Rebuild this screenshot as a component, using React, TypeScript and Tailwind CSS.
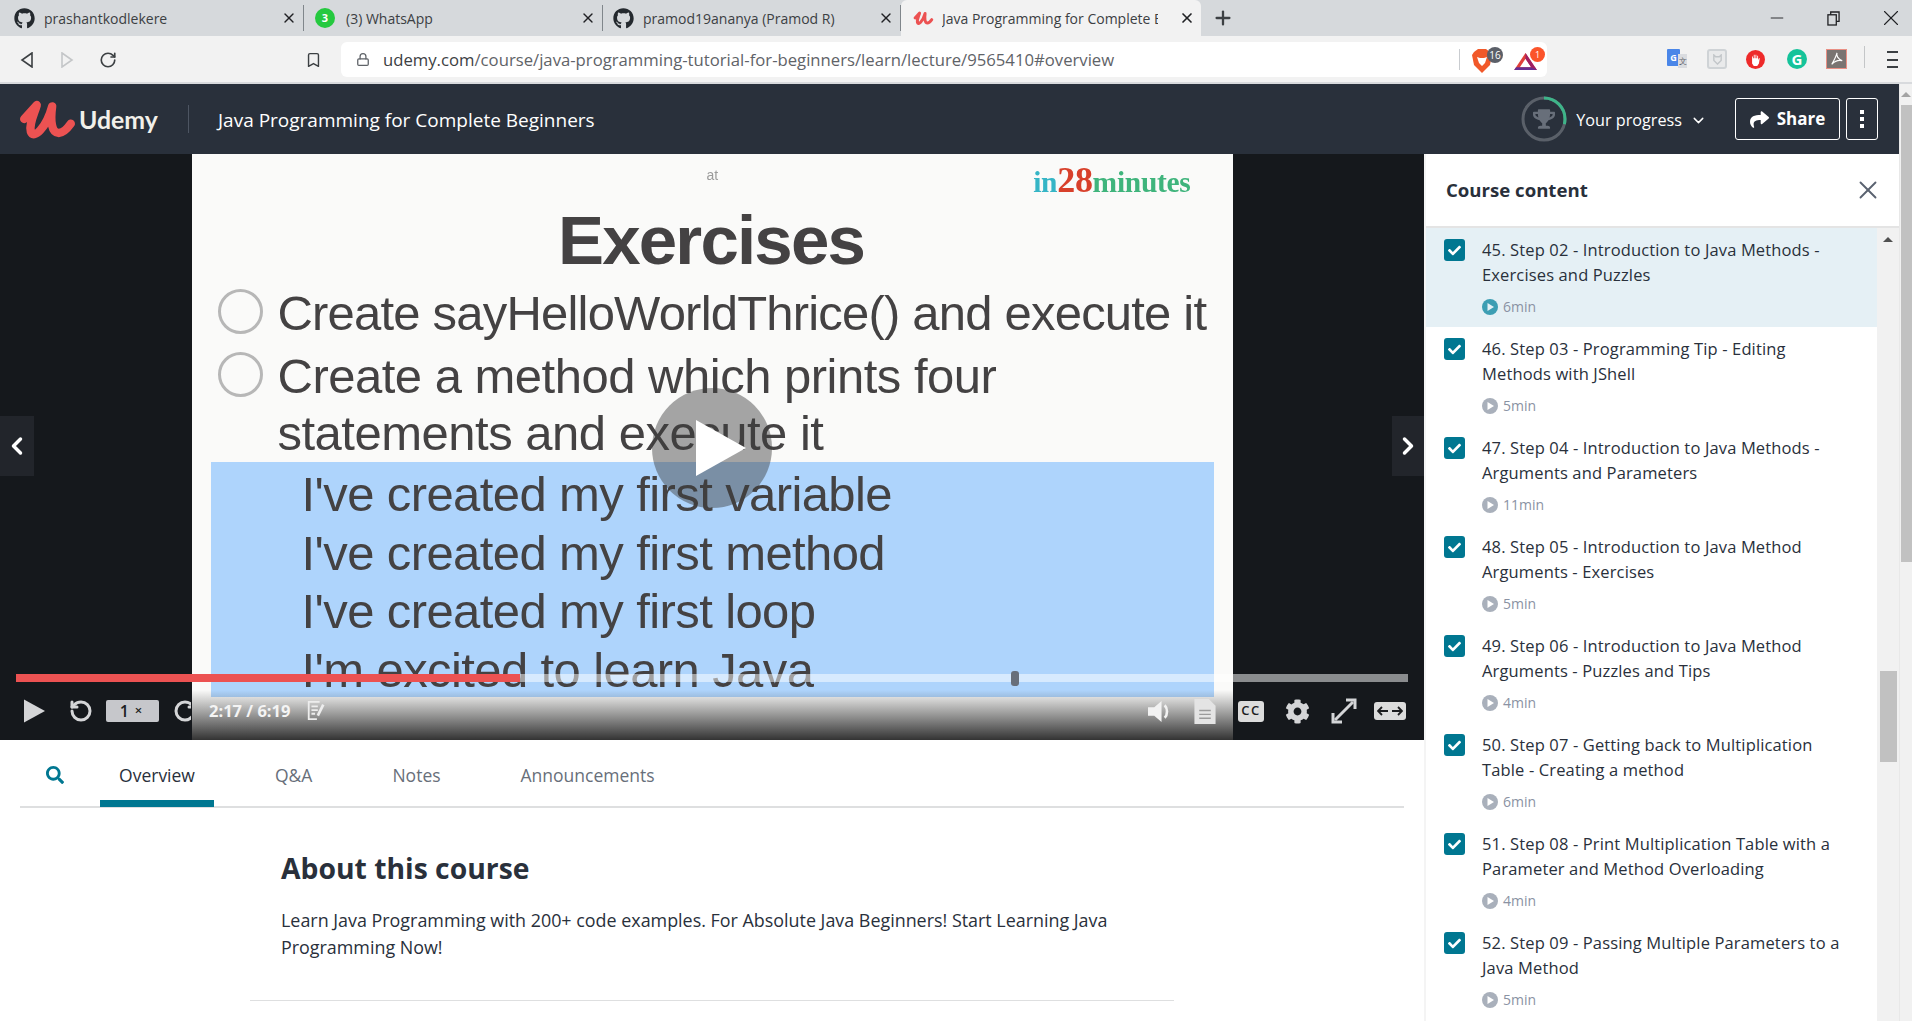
import React from 'react';
import { FaGithub, FaTrophy, FaShare, FaCog, FaCheck, FaSearch } from 'react-icons/fa';
import { ChevronDown, ChevronLeft, ChevronRight, X, Plus, RotateCcw, RotateCw, Minus, Lock, Bookmark } from 'lucide-react';

const UdemyMark: React.FC<{ className?: string }> = ({ className }) => (
  <svg viewBox="0 0 200 168" className={className} fill="none">
    <path
      d="M42 84 L80 42 C72 70 56 98 62 122 C70 146 108 112 126 46 C120 90 124 126 146 126 C160 126 172 112 182 98"
      stroke="#ec5252"
      strokeWidth="25"
      strokeLinecap="round"
      strokeLinejoin="round"
    />
  </svg>
);

const tabs = [
  { title: 'prashantkodlekere', w: 'w-[304px]', pad: 'pl-[14px]', gap: 'gap-[9px]' },
  { title: '(3) WhatsApp', w: 'w-[299px]', pad: 'pl-[11px]', gap: 'gap-[11px]' },
  { title: 'pramod19ananya (Pramod R)', w: 'w-[298px]', pad: 'pl-[10px]', gap: 'gap-[9px]' },
];

const lessons = [
  { title: '45. Step 02 - Introduction to Java Methods - Exercises and Puzzles', time: '6min', active: true },
  { title: '46. Step 03 - Programming Tip - Editing Methods with JShell', time: '5min' },
  { title: '47. Step 04 - Introduction to Java Methods - Arguments and Parameters', time: '11min' },
  { title: '48. Step 05 - Introduction to Java Method Arguments - Exercises', time: '5min' },
  { title: '49. Step 06 - Introduction to Java Method Arguments - Puzzles and Tips', time: '4min' },
  { title: '50. Step 07 - Getting back to Multiplication Table - Creating a method', time: '6min' },
  { title: '51. Step 08 - Print Multiplication Table with a Parameter and Method Overloading', time: '4min' },
  { title: '52. Step 09 - Passing Multiple Parameters to a Java Method', time: '5min' },
];

const TabStrip: React.FC = () => (
  <div className="flex h-[36px] bg-[#d6d9dc] text-[14px] text-[#3c4043]">
    {tabs.map((t, i) => (
      <div key={t.title} className={`flex items-center ${t.w} ${t.pad} ${t.gap} relative`}>
        {i === 1 ? (
          <div className="w-[20px] h-[20px] rounded-full bg-[#25c93f] text-white text-[11px] font-bold flex items-center justify-center">3</div>
        ) : (
          <FaGithub className="w-[21px] h-[21px] text-[#24292e]" />
        )}
        <span>{t.title}</span>
        <X className="absolute right-[7px] w-[16px] h-[16px] text-[#202124]" strokeWidth={2} />
        <div className="absolute right-0 top-[5px] h-[26px] w-px bg-[#80868b]" />
      </div>
    ))}
    <div className="w-[300px] bg-[#f2f2f2] flex items-center pl-[9px] gap-[8px] relative rounded-t-[6px]">
      <UdemyMark className="w-[24px] h-[20px] shrink-0" />
      <span className="whitespace-nowrap overflow-hidden w-[216px]">Java Programming for Complete B</span>
      <X className="absolute right-[6px] w-[16px] h-[16px] text-[#202124]" strokeWidth={2.5} />
    </div>
    <Plus className="w-[22px] h-[22px] ml-[11px] mt-[7px] text-[#3c4043]" strokeWidth={2.5} />
    <div className="flex-1 flex items-center justify-end text-[#202124]">
      <Minus className="w-[20px] h-[20px] mr-[40px]" strokeWidth={1.1} />
      <svg viewBox="0 0 14 16" className="w-[13px] h-[15px] mr-[38px]" fill="none" stroke="currentColor" strokeWidth="1.4">
        <rect x="1" y="4" width="9" height="11" />
        <path d="M4 4V1h9v10h-3" />
      </svg>
      <X className="w-[26px] h-[26px] mr-[8px]" strokeWidth={1} />
    </div>
  </div>
);

const Toolbar: React.FC = () => (
  <div className="h-[48px] bg-[#f2f2f2] border-b-2 border-[#d8dadd] flex items-center relative">
    <svg viewBox="0 0 14 16" className="w-[14px] h-[16px] ml-[20px] mt-[2px]" fill="none" stroke="#3c4043" strokeWidth="1.6">
      <path d="M12 1 L2 8 L12 15 Z" />
    </svg>
    <svg viewBox="0 0 14 16" className="w-[14px] h-[16px] ml-[26px] mt-[2px]" fill="none" stroke="#c4c6c8" strokeWidth="1.6">
      <path d="M2 1 L12 8 L2 15 Z" />
    </svg>
    <RotateCw className="w-[18px] h-[18px] ml-[25px] mt-[2px] text-[#3c4043]" strokeWidth={2.2} />
    <Bookmark className="w-[17px] h-[18px] ml-[188px] mt-[2px] text-[#3c4043]" strokeWidth={2} />
    <div className="ml-[19px] w-[1206px] h-[35px] mt-[1px] bg-white rounded-[6px] flex items-center pl-[15px] relative">
      <Lock className="w-[14px] h-[15px] text-[#5f6368]" strokeWidth={2.2} />
      <span className="ml-[13px] text-[16.7px] text-[#5f6368] whitespace-nowrap">
        <span className="text-[#3c4043]">udemy.com</span>/course/java-programming-tutorial-for-beginners/learn/lecture/9565410#overview
      </span>
      <div className="absolute left-[1118px] top-[7px] h-[21px] w-px bg-[#c9ccd0]" />
      <svg viewBox="0 0 20 24" className="absolute left-[1131px] top-[7px] w-[20px] h-[24px]">
        <path d="M2 3l4-3h8l4 3 2 3-2 10-8 8-8-8L0 6z" fill="#f1592a" />
        <path d="M5 8l3 1h4l3-1-2 6-3 3-3-3z" fill="#fff" />
      </svg>
      <div className="absolute left-[1146px] top-[5px] w-[16px] h-[16px] rounded-full bg-[#5b5f68] text-white text-[10px] flex items-center justify-center">16</div>
      <svg viewBox="0 0 24 18" className="absolute left-[1173px] top-[11px] w-[23px] h-[17px]">
        <path d="M12 0 L24 18 H0 Z" fill="#e0403a" />
        <path d="M12 6 L18 15 H6 Z" fill="#fff" />
        <path d="M0 18 H24 L22 15 H2 Z" fill="#662d91" />
        <path d="M12 0 L24 18 L18 15 L12 6 Z" fill="#9e1f63" />
      </svg>
      <div className="absolute left-[1189px] top-[5px] w-[15px] h-[15px] rounded-full bg-[#fb542b] text-white text-[9px] flex items-center justify-center">1</div>
    </div>
    <div className="absolute left-[1667px] top-[13px] w-[13px] h-[17px] bg-[#4a86e8] rounded-[1px] text-white text-[9px] font-bold flex items-center justify-center">G</div>
    <div className="absolute left-[1678px] top-[18px] w-[9px] h-[14px] bg-[#dadce0] text-[#5f6368] text-[8px] flex items-center justify-center">文</div>
    <div className="absolute left-[1707px] top-[13px] w-[20px] h-[20px] border-2 border-[#cfd3d6] rounded-[3px] bg-[#e9eaeb] flex items-center justify-center">
      <svg viewBox="0 0 12 12" className="w-[11px] h-[11px]" fill="none" stroke="#c2c6c9" strokeWidth="1.5">
        <path d="M2 1v6l4 4 4-4V1L8 3H4z" />
      </svg>
    </div>
    <div className="absolute left-[1746px] top-[14px] w-[19px] h-[19px] rounded-full bg-[#ee2a2a] flex items-center justify-center">
      <svg viewBox="0 0 12 14" className="w-[11px] h-[12px]" fill="#fff">
        <path d="M2 5V3h1v2h1V1h1v4h1V1h1v4h1V2h1v5l1-2h1l-1 6-2 3H4L2 11z" />
      </svg>
    </div>
    <div className="absolute left-[1787px] top-[13px] w-[20px] h-[20px] rounded-full bg-[#15c39a] text-white text-[15px] font-bold flex items-center justify-center">G</div>
    <div className="absolute left-[1826px] top-[13px] w-[21px] h-[20px] bg-[#7a7472] border border-[#e98f84] flex items-center justify-center">
      <svg viewBox="0 0 16 16" className="w-[14px] h-[14px]" fill="none" stroke="#fff" strokeWidth="1.3">
        <path d="M8 1c-1 3 1 7 6 9-4-1-8 0-12 4 3-5 5-9 6-13z" />
      </svg>
    </div>
    <div className="absolute left-[1864px] top-[10px] h-[22px] w-px bg-[#c4c6c8]" />
    <div className="absolute left-[1887px] top-[15px] w-[11px] h-[17px] flex flex-col justify-between">
      <div className="h-[2px] bg-[#3c4043]" />
      <div className="h-[2px] bg-[#3c4043]" />
      <div className="h-[2px] bg-[#3c4043]" />
    </div>
  </div>
);

const Header: React.FC = () => (
  <div className="h-[70px] bg-[#29303b] flex items-center text-white shrink-0">
    <UdemyMark className="ml-[10px] w-[67px] h-[56px]" />
    <span className="ml-[2px] text-[24.8px] font-bold text-[#f2f0ea] font-['Lato'] w-[77px] mt-px">Udemy</span>
    <div className="ml-[32px] h-[28px] w-px bg-[#4d5562]" />
    <span className="ml-[29px] text-[19px] mt-[3px]">Java Programming for Complete Beginners</span>
    <div className="ml-auto flex items-center">
      <div className="relative w-[46px] h-[46px] flex items-center justify-center">
        <svg viewBox="0 0 46 46" className="absolute inset-0 -rotate-90">
          <circle cx="23" cy="23" r="21" fill="none" stroke="#5a6069" strokeWidth="3" />
          <circle cx="23" cy="23" r="21" fill="none" stroke="#3eb489" strokeWidth="3" strokeDasharray="38 132" />
        </svg>
        <FaTrophy className="w-[22px] h-[22px] text-[#686f7a]" />
      </div>
      <span className="ml-[9px] text-[16.2px] mt-[3px]">Your progress</span>
      <ChevronDown className="ml-[8px] w-[17px] h-[17px] mt-[2px]" />
      <button className="ml-[28px] w-[105px] h-[42px] border border-white rounded-[3px] flex items-center justify-center gap-[8px] font-bold text-[17px]">
        <FaShare className="w-[19px] h-[19px]" />
        Share
      </button>
      <button className="ml-[6px] mr-[21px] w-[32px] h-[42px] border border-white rounded-[3px] flex flex-col items-center justify-center gap-[3px]">
        <div className="w-[4px] h-[4px] bg-white" />
        <div className="w-[4px] h-[4px] bg-white" />
        <div className="w-[4px] h-[4px] bg-white" />
      </button>
    </div>
  </div>
);

const Slide: React.FC = () => (
  <div className="w-[1041px] h-[586px] bg-[#fafaf9] mx-auto relative overflow-hidden font-['Liberation_Sans'] text-[#444243] flex flex-col">
    <div className="h-[50px] shrink-0 flex items-center relative">
      <span className="ml-[515px] text-[14px] text-[#9b9b9b] mt-[-7px]">at</span>
      <span className="ml-[315px] font-['Liberation_Serif'] font-bold text-[29.5px] text-[#3fb47c] mt-[1px] whitespace-nowrap tracking-[-0.3px]">
        <span className="text-[#35b5c6]">in</span>
        <span className="text-[#d8402b] text-[36px]">28</span>minutes
      </span>
    </div>
    <div className="h-[70px] mt-[2px] shrink-0 text-center font-bold text-[69px] leading-[70px] tracking-[-1.8px] pr-[2px]">Exercises</div>
    <div className="mt-[8px] flex items-center gap-[15px] pl-[26px] h-[58px] text-[49px] leading-[58px] tracking-[-0.8px] whitespace-nowrap">
      <div className="w-[45px] h-[45px] rounded-full border-[3px] border-[#b7b7b7] shrink-0 -mt-[3px]" />
      Create sayHelloWorldThrice() and execute it
    </div>
    <div className="mt-[5px] flex items-center gap-[15px] pl-[26px] h-[58px] text-[49px] leading-[58px] tracking-[-0.5px] whitespace-nowrap">
      <div className="w-[45px] h-[45px] rounded-full border-[3px] border-[#b7b7b7] shrink-0 -mt-[3px]" />
      Create a method which prints four
    </div>
    <div className="pl-[86px] h-[58px] -mt-px text-[49px] leading-[58px] tracking-[-0.5px] whitespace-nowrap">statements and execute it</div>
    <div className="ml-[19px] w-[1003px] h-[235px] bg-[#aed4fc] pl-[91px] pt-[3px] text-[49px] leading-[58.5px] tracking-[-0.6px] whitespace-nowrap shrink-0">
      <div>I've created my first variable</div>
      <div>I've created my first method</div>
      <div>I've created my first loop</div>
      <div>I'm excited to learn Java</div>
    </div>
    <div className="absolute left-0 right-0 bottom-0 h-[50px] bg-linear-to-b from-transparent to-[#333333]" />
  </div>
);

const VideoControls: React.FC = () => (
  <>
    <div className="absolute left-[16px] right-[16px] top-[520px] h-[8px] bg-[rgba(255,255,255,0.5)]">
      <div className="h-full w-[504px] bg-[#ec5252]" />
      <div className="absolute left-[995px] top-[-3px] w-[8px] h-[15px] rounded-[3px] bg-[#686f7a]" />
    </div>
    <div className="absolute left-0 right-0 top-[546px] h-[22px] flex items-center text-[#d4d5d7]">
      <svg viewBox="0 0 22 24" className="ml-[24px] w-[21px] h-[24px] shrink-0" fill="currentColor">
        <path d="M0 0 L22 12 L0 24 Z" />
      </svg>
      <RotateCcw className="ml-[24px] w-[24px] h-[24px] shrink-0" strokeWidth={3} />
      <div className="ml-[13px] w-[53px] h-[22px] bg-[#c6c7cb] rounded-[2px] text-[#1c1d1f] text-[16px] flex items-center justify-center gap-[6px] font-semibold shrink-0 pr-[3px]">
        1<span className="text-[13px]">×</span>
      </div>
      <div className="ml-[14px] w-[18px] h-[24px] overflow-hidden shrink-0">
        <RotateCw className="w-[24px] h-[24px]" strokeWidth={3} />
      </div>
      <span className="ml-[18px] w-[81px] text-[16.5px] font-bold text-[#f4f4f4] whitespace-nowrap shrink-0">2:17 / 6:19</span>
      <svg viewBox="0 0 20 22" className="ml-[16px] w-[20px] h-[20px] shrink-0" fill="none" stroke="#ededed" strokeWidth="2">
        <path d="M14 1H2v19h9M5 6h7M5 10h7M5 14h4" />
        <path d="M18 4l-6 12" strokeWidth="3" />
      </svg>
      <svg viewBox="0 0 24 22" className="ml-[822px] w-[25px] h-[23px] shrink-0" fill="#f2f2f2">
        <path d="M0 7h6l7-6v20l-7-6H0z" />
        <path d="M16 5c3 3 3 9 0 12" fill="none" stroke="#f2f2f2" strokeWidth="2.5" />
      </svg>
      <svg viewBox="0 0 22 26" className="ml-[21px] w-[22px] h-[25px] shrink-0">
        <path d="M0 0h15l7 7v19H0z" fill="#e4e4e4" />
        <path d="M5 12h12M5 16h12M5 20h12" stroke="#9a9a9a" strokeWidth="1.5" />
      </svg>
      <div className="ml-[22px] w-[26px] h-[21px] rounded-[3px] bg-[#dcdcdc] text-[#1c1d1f] text-[13px] font-semibold flex items-center justify-center tracking-[1.5px] shrink-0">CC</div>
      <FaCog className="ml-[21px] w-[25px] h-[25px] shrink-0" />
      <svg viewBox="0 0 26 26" className="ml-[21px] w-[26px] h-[26px] shrink-0" fill="none" stroke="currentColor" strokeWidth="3">
        <path d="M4 22 L22 4" />
        <path d="M15 2h9v9M2 15v9h9" />
      </svg>
      <div className="ml-[17px] w-[32px] h-[18px] rounded-[3px] bg-[#dcdcdc] flex items-center justify-center shrink-0">
        <svg viewBox="0 0 26 10" className="w-[26px] h-[10px]" fill="none" stroke="#1c1d1f" strokeWidth="1.8">
          <path d="M11 5H1M5 1L1 5l4 4M15 5h10M21 1l4 4-4 4" />
        </svg>
      </div>
    </div>
  </>
);

const Video: React.FC = () => (
  <div className="relative h-[586px] w-[1424px] bg-[#15181c] overflow-hidden shrink-0">
    <div className="blur-[0.4px]">
      <Slide />
    </div>
    <div className="absolute left-[652px] top-[234px] w-[120px] h-[120px] rounded-full bg-[rgba(60,60,60,0.45)] flex items-center justify-center">
      <svg viewBox="0 0 50 56" className="w-[50px] h-[56px] ml-[18px]" fill="#fff">
        <path d="M0 0 L50 28 L0 56 Z" />
      </svg>
    </div>
    <div className="absolute left-0 top-[262px] w-[34px] h-[60px] bg-[#22252b] flex items-center justify-center">
      <ChevronLeft className="w-[28px] h-[28px] text-white" strokeWidth={3} />
    </div>
    <div className="absolute right-0 top-[262px] w-[32px] h-[60px] bg-[#22252b] flex items-center justify-center">
      <ChevronRight className="w-[28px] h-[28px] text-white" strokeWidth={3} />
    </div>
    <VideoControls />
  </div>
);

const Details: React.FC = () => (
  <div className="flex-1 bg-white">
    <div className="ml-[20px] mr-[20px] h-[68px] border-b-2 border-[#dedfe0] flex items-start">
      <div className="w-[80px] pt-[26px] pl-[26px]">
        <FaSearch className="w-[18px] h-[18px] text-[#007791]" />
      </div>
      <div className="flex gap-[42px] text-[17.5px] text-[#686f7a] whitespace-nowrap">
        <div className="w-[114px] text-center h-[67px] pt-[22px] border-b-[7px] border-[#007791] text-[#29303b]">Overview</div>
        <div className="px-[19px] pt-[22px]">Q&amp;A</div>
        <div className="px-[19px] pt-[22px]">Notes</div>
        <div className="px-[19px] pt-[22px]">Announcements</div>
      </div>
    </div>
    <div className="w-[924px] mx-auto pt-[42px]">
      <h2 className="pl-[31px] text-[28.3px] font-bold text-[#29303b] leading-[36px]">About this course</h2>
      <p className="pl-[31px] pr-[40px] mt-[21px] text-[17.9px] leading-[27px] text-[#29303b]">
        Learn Java Programming with 200+ code examples. For Absolute Java Beginners! Start Learning Java Programming Now!
      </p>
      <div className="mt-[39px] h-px bg-[#dedfe0]" />
    </div>
  </div>
);

const Lesson: React.FC<{ title: string; time: string; active?: boolean }> = ({ title, time, active }) => (
  <div className={`h-[99px] shrink-0 flex pl-[18px] pt-[11px] ${active ? 'bg-[#e5f0f5]' : 'bg-white'}`}>
    <div className="w-[21px] h-[22px] rounded-[3px] bg-[#007791] flex items-center justify-center shrink-0">
      <FaCheck className="w-[13px] h-[13px] text-white" />
    </div>
    <div className="ml-[17px] pr-[26px]">
      <div className="-mt-[2px] text-[16.5px] tracking-[0.14px] leading-[25px] text-[#29303b]">{title}</div>
      <div className="mt-[9px] flex items-center gap-[5px] text-[14px] text-[#8a92a3]">
        <svg viewBox="0 0 16 16" className="w-[16px] h-[16px]">
          <circle cx="8" cy="8" r="8" fill={active ? '#3d9eb3' : '#a9b0bb'} />
          <path d="M5.5 4 L12 8 L5.5 12 Z" fill={active ? '#e5f0f5' : '#fff'} />
        </svg>
        {time}
      </div>
    </div>
  </div>
);

const Sidebar: React.FC = () => (
  <div className="w-[475px] h-[867px] bg-white border-l-2 border-[#f4f4f4] flex flex-col shrink-0">
    <div className="h-[74px] shrink-0 flex items-center justify-between pl-[20px] pr-[16px] border-b-2 border-[#e4e4e4]">
      <span className="text-[18.6px] font-bold text-[#29303b]">Course content</span>
      <X className="w-[30px] h-[30px] text-[#5a6270]" strokeWidth={1.5} />
    </div>
    <div className="flex flex-1 min-h-0">
      <div className="flex-1 flex flex-col overflow-hidden">
        {lessons.map(l => (
          <Lesson key={l.title} {...l} />
        ))}
      </div>
      <div className="w-[22px] bg-[#f1f1f1] flex flex-col items-center shrink-0">
        <div className="mt-[9px] w-0 h-0 border-x-[5px] border-x-transparent border-b-[5px] border-b-[#505050]" />
        <div className="mt-[429px] w-[17px] h-[91px] bg-[#c1c1c1]" />
      </div>
    </div>
  </div>
);

export default function App() {
  return (
    <div className="w-[1912px] h-[1021px] overflow-hidden font-['Open_Sans',sans-serif] flex flex-col bg-white">
      <TabStrip />
      <Toolbar />
      <div className="flex flex-1 min-h-0">
        <div className="flex-1 flex flex-col min-w-0">
          <Header />
          <div className="flex flex-1 min-h-0">
            <div className="w-[1424px] flex flex-col shrink-0">
              <Video />
              <Details />
            </div>
            <Sidebar />
          </div>
        </div>
        <div className="w-[13px] bg-[#f1f1f1] border-l border-[#e8e8e8] flex flex-col items-end shrink-0">
          <div className="mt-[8px] mr-[1px] w-0 h-0 border-x-[5px] border-x-transparent border-b-[5px] border-b-[#a3a3a3]" />
          <div className="mt-[8px] w-[11px] h-[457px] bg-[#c1c1c1]" />
        </div>
      </div>
    </div>
  );
}
